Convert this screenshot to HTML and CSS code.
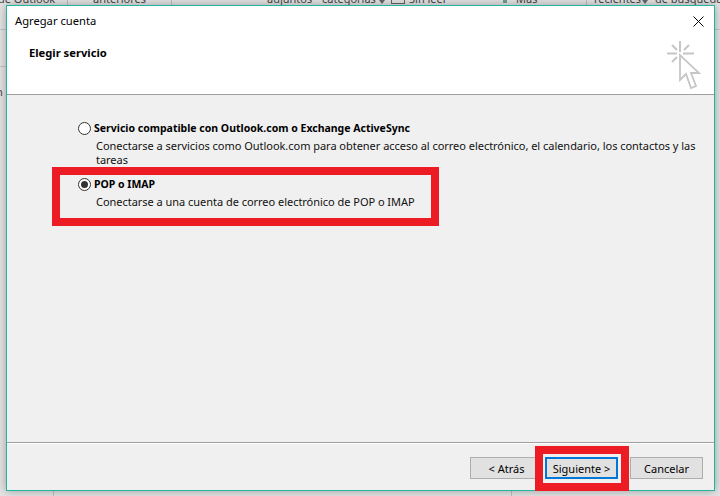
FILE: index.html
```html
<!DOCTYPE html>
<html lang="es">
<head>
<meta charset="utf-8">
<title>Agregar cuenta</title>
<link rel="stylesheet" href="styles.css">
</head>
<body>
<div class="ribbon">
  <span class="rb rb-a">de Outlook</span>
  <span class="rb rb-b">anteriores</span>
  <span class="rb rb-c">adjuntos</span>
  <span class="rb rb-d">categorías</span>
  <span class="caret caret-d"></span>
  <span class="check"></span>
  <span class="rb rb-e">Sin leer</span>
  <span class="flag"></span>
  <span class="rb rb-f">Más</span>
  <span class="rb rb-g">recientes</span>
  <span class="caret caret-g"></span>
  <span class="rb rb-h">de búsqueda</span>
  <span class="vline v1"></span>
  <span class="vline v2"></span>
  <span class="vline v3"></span>
</div>
<span class="hline h1"></span>
<span class="hline h2"></span>
<span class="hline h3"></span>
<span class="side-letter">n</span>
<span class="vline v4"></span>
<span class="vline v5"></span>
<main class="dialog">
  <header class="head">
    <div class="title-row">
      <span class="title">Agregar cuenta</span>
      <svg class="close" width="11" height="11" viewBox="0 0 11 11"><path d="M.5.5l10 10M10.5.5l-10 10" stroke="#000" fill="none"/></svg>
    </div>
    <div class="sub-row">
      <h1 class="subtitle">Elegir servicio</h1>
      <svg class="wizard" width="36" height="50" viewBox="0 0 36 50" fill="none" stroke="#c6c6c6" stroke-width="2">
        <path d="M15 1v11M2 13.5h10M18 13.5h11M7 5l5 5M24 5l-5 5M7 22l5-5"/>
        <path d="M15 15V40L21 34L26 48L31 46L26 33H34Z" stroke-width="1.8"/>
      </svg>
    </div>
  </header>
  <section class="body">
    <div class="option">
      <label class="opt-label"><span class="radio"></span>Servicio compatible con Outlook.com o Exchange ActiveSync</label>
      <p class="opt-desc">Conectarse a servicios como Outlook.com para obtener acceso al correo electrónico, el calendario, los contactos y las tareas</p>
    </div>
    <div class="option second">
      <label class="opt-label"><span class="radio on"></span>POP o IMAP</label>
      <p class="opt-desc">Conectarse a una cuenta de correo electrónico de POP o IMAP</p>
    </div>
  </section>
  <footer class="foot">
    <button class="btn">&lt; Atrás</button>
    <button class="btn primary">Siguiente &gt;</button>
    <button class="btn cancel">Cancelar</button>
  </footer>
</main>
<div class="mark mark-pop"></div>
<div class="mark mark-next"></div>
</body>
</html>
```
FILE: styles.css
```css
* { box-sizing: border-box; }
html, body { margin: 0; height: 100%; }
body { width: 720px; height: 496px; position: relative; overflow: hidden; background: #e4e4e4; font-family: "Noto Sans", sans-serif; font-size: 11px; color: #000; }
.ribbon { position: absolute; inset: 0 0 auto 0; height: 6px; overflow: hidden; color: #444; }
.rb { position: absolute; top: -9px; line-height: 16px; font-size: 11px; white-space: nowrap; }
.rb-a { left: -2px; } .rb-b { left: 93px; } .rb-c { left: 267px; } .rb-d { left: 322px; } .rb-e { left: 409px; } .rb-f { left: 516px; } .rb-g { left: 594px; } .rb-h { left: 655px; }
.caret { position: absolute; top: 0; border: 3px solid transparent; border-top: 4px solid #666; }
.caret-d { left: 379px; } .caret-g { left: 642px; }
.check { position: absolute; left: 391px; top: -8px; width: 14px; height: 12px; border: 1px solid #666; }
.flag { position: absolute; left: 503px; top: 0; width: 4px; height: 3px; background: #6ba08e; }
.vline { position: absolute; width: 1px; background: #bdbdbd; }
.v1 { left: 67px; top: 0; height: 6px; } .v2 { left: 171px; top: 0; height: 6px; } .v3 { left: 586px; top: 0; height: 6px; }
.v4 { left: 53px; top: 490px; height: 6px; } .v5 { left: 511px; top: 490px; height: 6px; }
.hline { position: absolute; height: 1px; background: #c4c4c4; }
.h1 { left: 0; top: 29px; width: 6px; } .h2 { left: 0; top: 66px; width: 6px; } .h3 { left: 715px; top: 29px; width: 5px; }
.side-letter { position: absolute; left: -4px; top: 84px; line-height: 16px; font-size: 11px; color: #444; }
.dialog { position: absolute; left: 6px; top: 5px; width: 709px; height: 486px; background: #f0f0f0; border: 1px solid #1fb59e; display: flex; flex-direction: column; box-shadow: 0 0 9px rgba(0,0,0,.32); }
.head { height: 89px; background: #fff; border-bottom: 1px solid #a0a0a0; flex: none; }
.title-row { display: flex; justify-content: space-between; align-items: center; padding: 0 10px 0 8px; height: 30px; }
.title { font-size: 11.2px; line-height: 16px; }
.sub-row { display: flex; justify-content: space-between; align-items: flex-start; padding: 0 13px 0 22px; }
.subtitle { margin: 9px 0 0; font-size: 11.2px; font-weight: 700; line-height: 16px; }
.wizard { margin-top: 4px; }
.body { flex: 1; padding: 25px 14px 0 71px; }
.opt-label { display: flex; align-items: center; gap: 3px; font-weight: 700; font-size: 10.5px; line-height: 16px; }
.radio { width: 13px; height: 13px; border: 1px solid #333; border-radius: 50%; background: #fff; flex: none; position: relative; }
.radio.on::after { content: ""; position: absolute; inset: 2px; border-radius: 50%; background: #333; }
.opt-desc { margin: 3px 0 0 18px; font-size: 11px; letter-spacing: -0.03px; line-height: 14px; color: #111; }
.second { margin-top: 9px; }
.foot { flex: none; height: 48px; border-top: 1px solid #a0a0a0; box-shadow: inset 0 1px 0 #fff; display: flex; justify-content: flex-end; align-items: flex-start; gap: 2px; padding: 14px 11px 0 0; }
.btn { width: 73px; height: 22px; padding: 0; background: #e1e1e1; border: 1px solid #adadad; font: 11px/1 "Noto Sans", sans-serif; color: #000; }
.btn.primary { border: 2px solid #0078d7; }
.btn.cancel { margin-left: 10px; }
.mark { position: absolute; border: 8px solid #ed1c24; }
.mark-pop { left: 52px; top: 167px; width: 387px; height: 59px; }
.mark-next { left: 535px; top: 446px; width: 94px; height: 45px; }
```
